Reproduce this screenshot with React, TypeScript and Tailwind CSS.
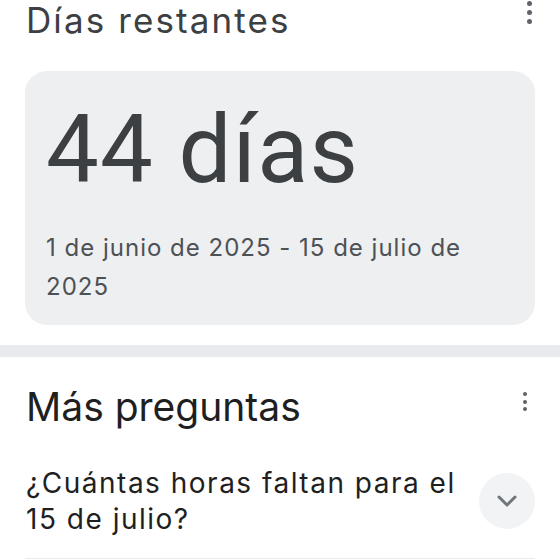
const font = { fontFamily: "Inter, 'Noto Sans', sans-serif" };
const roboto = { fontFamily: "Roboto, 'Noto Sans', sans-serif" };

const Dots = ({ size, gap }: { size: number; gap: number }) => (
    <div className="flex flex-col items-center" style={{ gap }}>
        {[0, 1, 2].map(i => (
            <span key={i} className="block rounded-full bg-[#5f6368]" style={{ width: size, height: size }} />
        ))}
    </div>
)

export default function App() {
    return (
        <div className="w-[560px] h-[560px] overflow-hidden bg-white" style={font}>
            <div className="px-[25px]">
                <div className="flex justify-between items-start">
                    <h1 className="text-[35px] leading-[40px] tracking-[2.1px] text-[#3c4043] pl-[1px]">Días restantes</h1>
                    <div className="pt-[1px] pr-[3px]">
                        <Dots size={5} gap={4} />
                    </div>
                </div>
                <div className="mt-[31px] h-[254px] rounded-[22px] bg-[#edeff1] pl-[21px] pt-[32px]">
                    <div className="text-[94px] leading-[94px] tracking-[1.2px] text-[#3c4043]" style={roboto}>44 días</div>
                    <div className="mt-[31px] text-[24px] leading-[39px] tracking-[1px] text-[#4d5156] w-[440px]">
                        1 de junio de 2025 - 15 de julio de 2025
                    </div>
                </div>
            </div>
            <div className="mt-[20px] h-[12px] bg-[#e8eaed]" />
            <div className="px-[25px]">
                <div className="mt-[27px] flex justify-between items-start">
                    <h2 className="text-[39px] leading-[46px] text-[#1f1f1f] pl-[1px]">Más preguntas</h2>
                    <div className="pt-[8px] pr-[8px]">
                        <Dots size={4} gap={3.5} />
                    </div>
                </div>
                <div className="mt-[35px] pb-[21px] border-b border-[#e8eaed] flex items-center justify-between">
                    <p className="w-[440px] text-[28px] leading-[36px] tracking-[1.5px] text-[#1f1f1f] pl-[1px]">
                        ¿Cuántas horas faltan para el 15 de julio?
                    </p>
                    <button className="w-[56px] h-[56px] rounded-full bg-[#f1f3f4] flex items-center justify-center">
                        <svg width="20" height="12" viewBox="0 0 20 12" fill="none" stroke="#70757a" strokeWidth="3" strokeLinecap="round" strokeLinejoin="round">
                            <path d="M2 2l8 8 8-8" />
                        </svg>
                    </button>
                </div>
            </div>
        </div>
    )
}
